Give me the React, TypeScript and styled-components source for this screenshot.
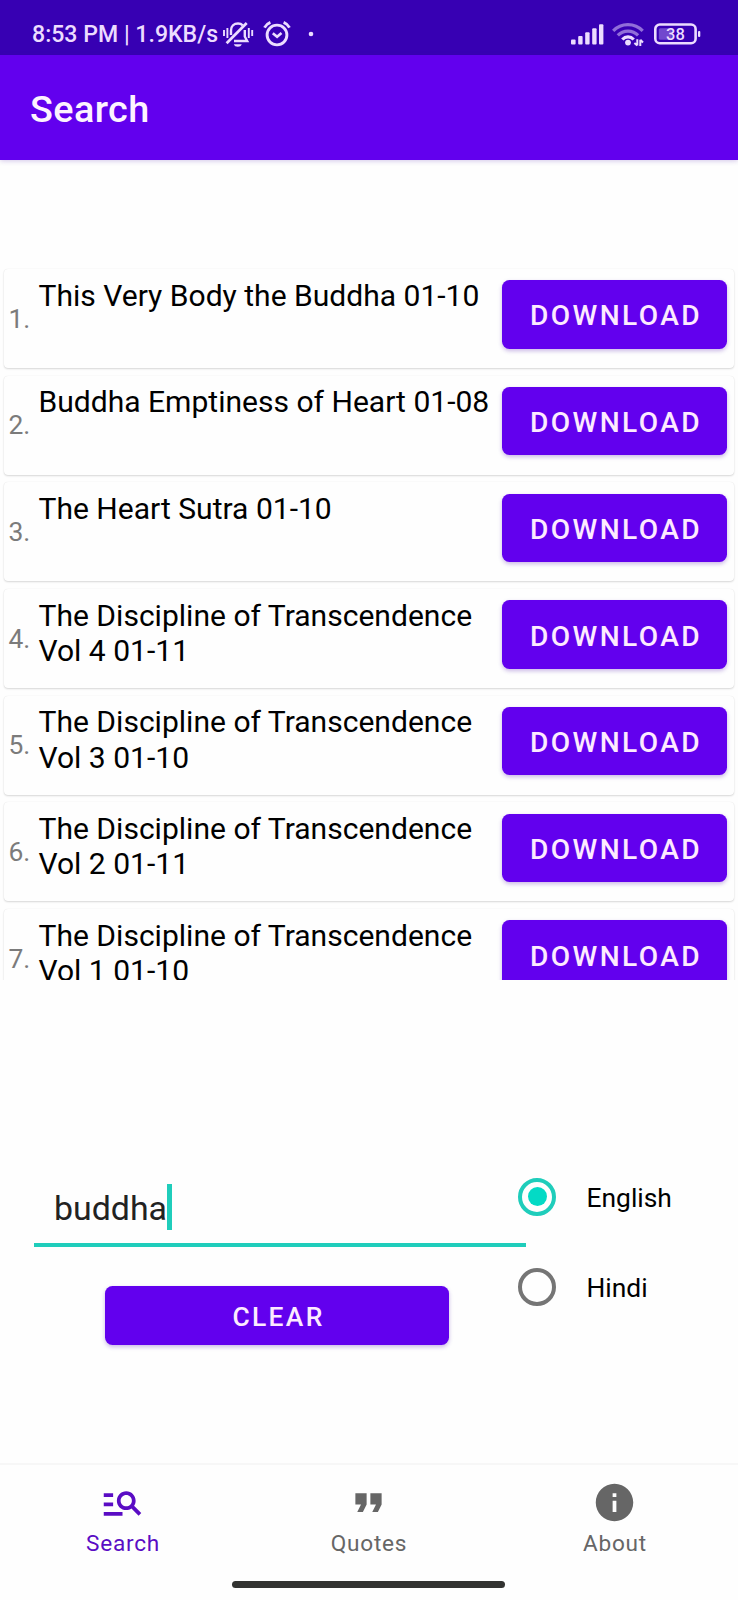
import React, { useState } from "react";
import styled, { createGlobalStyle, css } from "styled-components";
import { MdManageSearch, MdFormatQuote, MdInfo } from "react-icons/md";

const GlobalStyle = createGlobalStyle`
  *, *::before, *::after { box-sizing: border-box; }
  html, body { margin: 0; padding: 0; background: #fff; }
  body { font-family: Roboto, "Liberation Sans", sans-serif; overflow: hidden; }
  button, input { font-family: inherit; }
`;

const Screen = styled.div`
  display: flex;
  flex-direction: column;
  width: 738px;
  height: 1600px;
  background: #fefefe;
  overflow: hidden;
`;

const StatusBar = styled.header`
  display: flex;
  justify-content: space-between;
  align-items: center;
  flex: none;
  height: 55px;
  padding: 13px 36px 0 32px;
  background: #3700b3;
  color: #ecdcff;
`;

const StatusGroup = styled.div`
  display: flex;
  align-items: center;
`;

const Clock = styled.span`
  width: 190px;
  padding-top: 2px;
  font-size: 23.1px;
  line-height: 28px;
  font-weight: 500;
  white-space: nowrap;
`;

const StatusIcon = styled.svg<{ $gap?: number }>`
  display: block;
  flex: none;
  margin-left: ${(p) => p.$gap ?? 0}px;
`;

const AppBar = styled.div`
  display: flex;
  align-items: center;
  flex: none;
  height: 105px;
  padding: 3px 30px 0;
  background: #6200ee;
  box-shadow: 0 1px 5px rgba(60, 0, 160, 0.22);
`;

const AppTitle = styled.h1`
  margin: 0;
  font-size: 37.8px;
  line-height: 44px;
  font-weight: 500;
  letter-spacing: 0.4px;
  color: #fdf3ff;
`;

const Results = styled.ol`
  flex: none;
  height: 720px;
  margin: 100px 0 0;
  padding: 9px 4px 0;
  list-style: none;
  overflow: hidden;
`;

const ResultCard = styled.li`
  display: flex;
  height: 99px;
  margin-bottom: 7.7px;
  padding: 0 7px 0 4.5px;
  border-radius: 4px;
  background: #fefefe;
  box-shadow: 0 1px 2px rgba(0, 0, 0, 0.15), 0 0 1px rgba(0, 0, 0, 0.1);
`;

const Index = styled.span`
  flex: none;
  width: 30px;
  padding-top: 34.6px;
  font-size: 26.4px;
  line-height: 31px;
  color: #7b7b7b;
`;

const BookTitle = styled.span`
  flex: 1;
  min-width: 0;
  padding-top: 8.6px;
  font-size: 30.05px;
  line-height: 35.4px;
  color: #000;
`;

const ContainedButton = styled.button<{ $wide?: boolean }>`
  flex: none;
  border: 0;
  border-radius: 7.5px;
  background: #6200ee;
  color: #fdeaff;
  font-weight: 500;
  text-transform: uppercase;
  box-shadow: 0 2px 4px rgba(70, 0, 170, 0.28);
  ${(p) =>
    p.$wide
      ? css`
          width: 344px;
          height: 59px;
          padding: 2px 0 0 3px;
          font-size: 26.4px;
          letter-spacing: 2.35px;
        `
      : css`
          width: 225px;
          height: 68.5px;
          margin-top: 11.2px;
          padding: 3px 0 0 3px;
          font-size: 28.1px;
          letter-spacing: 2.4px;
        `}
`;

const SearchPanel = styled.section`
  display: flex;
  flex: none;
  height: 283px;
  margin-top: 200px;
`;

const QueryColumn = styled.div`
  display: flex;
  flex-direction: column;
  align-items: center;
  gap: 39px;
  width: 485px;
  padding-left: 69px;
`;

const QueryField = styled.div`
  display: flex;
  align-items: flex-start;
  align-self: flex-start;
  width: 492.5px;
  height: 67px;
  margin-left: -35.5px;
  padding: 4px 0 0 20.5px;
  border-bottom: 4px solid #1fcdbb;
  font-size: 33.9px;
  line-height: 50px;
  color: #222;
`;

const Caret = styled.i`
  width: 5px;
  height: 46px;
  background: #1fcdbb;
`;

const LanguageGroup = styled.div`
  display: flex;
  flex-direction: column;
  width: 220px;
  margin-top: -2.5px;
  padding-left: 33px;
`;

const LanguageOption = styled.button`
  display: flex;
  align-items: center;
  gap: 30.5px;
  height: 38px;
  margin-bottom: 52.2px;
  padding: 0;
  border: 0;
  background: none;
  color: #000;
  font-size: 26.4px;
  text-align: left;
`;

const RadioRing = styled.span<{ $on: boolean }>`
  display: grid;
  place-items: center;
  flex: none;
  width: 38px;
  height: 38px;
  border: 4px solid ${(p) => (p.$on ? "#1fcdbb" : "#757575")};
  border-radius: 50%;

  &::after {
    content: "";
    width: 19px;
    height: 19px;
    border-radius: 50%;
    background: ${(p) => (p.$on ? "#03dac5" : "transparent")};
  }
`;

const OptionLabel = styled.span`
  padding-top: 2px;
`;

const BottomNav = styled.nav`
  display: grid;
  grid-template-columns: repeat(3, 1fr);
  flex: none;
  height: 118px;
  border-top: 2px solid #f7f7f7;
`;

const NavItem = styled.button<{ $active: boolean }>`
  display: flex;
  flex-direction: column;
  align-items: center;
  padding: 15px 0 0;
  border: 0;
  background: none;
  color: ${(p) => (p.$active ? "#5a0cc4" : "#666")};

  svg {
    display: block;
    width: 45px;
    height: 45px;
    margin-right: 0.6px;
  }
`;

const NavLabel = styled.span`
  margin-top: 5px;
  font-size: 22.6px;
  line-height: 27px;
  letter-spacing: 0.75px;
`;

const HomeIndicator = styled.div`
  flex: none;
  width: 273px;
  height: 7px;
  margin: 0 0 0 232px;
  border-radius: 4px;
  background: #323331;
`;

const MutedBell = () => (
  <StatusIcon width="32" height="28" viewBox="0 0 32 28" fill="none" stroke="currentColor" strokeWidth="2.4">
    <path d="M2 10v6M5.4 8v10M26.8 8v10M30.2 10v6" strokeWidth="1.9" />
    <path d="M9 15V10.500c0-4.200 3-7 7-7 2 0 3.600.7 4.700 1.800M22.800 10V16.500l2.400 4.500H12" />
    <path d="M4.600 23.200 24.700 3" strokeWidth="2.7" />
    <path d="M11.800 24.200h8c-.7 1.700-2 2.500-4 2.500s-3.400-.8-4-2.500z" fill="currentColor" stroke="none" />
  </StatusIcon>
);

const AlarmClock = () => (
  <StatusIcon $gap={8.5} width="28" height="28" viewBox="0 0 28 28" fill="none" stroke="currentColor" strokeWidth="2.9">
    <circle cx="14" cy="15" r="9.9" />
    <path d="m9.8 13.2 4.3 3.6 4.400-3.800" strokeWidth="2.6" />
    <path d="M1.500 7.700C2.700 5.400 4.600 3.500 7.400 2.400M26.500 7.700c-1.200-2.300-3.100-4.200-5.900-5.300" />
  </StatusIcon>
);

const MoreDot = () => (
  <StatusIcon $gap={17.5} width="6" height="6" viewBox="0 0 6 6">
    <circle cx="3" cy="3" r="2.3" fill="currentColor" />
  </StatusIcon>
);

const SignalBars = () => (
  <StatusIcon width="34" height="22" viewBox="0 0 34 22" fill="currentColor">
    <rect x="1" y="16.5" width="4.6" height="5" rx="1" />
    <rect x="8.2" y="12.9" width="4.4" height="8.6" rx="1" />
    <rect x="15.2" y="9.3" width="4.4" height="12.2" rx="1" />
    <rect x="22.2" y="5.3" width="4.4" height="16.2" rx="1" />
    <rect x="29" y="1.3" width="4.4" height="20.200" rx="1" />
  </StatusIcon>
);

const WifiSignal = () => (
  <StatusIcon $gap={8} width="32" height="25" viewBox="0 0 32 25" fill="none" stroke="currentColor" strokeWidth="3.2">
    <path d="M1.2 8.8c8-8.3 21.5-8.3 29.500 0" opacity=".5" />
    <path d="M5.8 13.300c5.500-5.700 14.800-5.700 20.300 0" opacity=".5" />
    <path d="M10.300 17.500c3.200-3.500 8.200-3.500 11.400 0" />
    <circle cx="16" cy="20.600" r="2.900" fill="currentColor" stroke="none" />
    <path d="M25.300 17.300v6.300M22.400 20.900l2.900 2.700M28.300 24v-6.300M31 20.500l-2.700-2.800" strokeWidth="2" />
  </StatusIcon>
);

const Battery = () => (
  <StatusIcon $gap={10} width="48" height="22" viewBox="0 0 48 22" fill="none">
    <rect x="1.3" y="1.5" width="40.3" height="18.7" rx="4.5" stroke="currentColor" strokeWidth="2.6" />
    <rect x="4.8" y="5.2" width="13" height="11.5" rx="1.5" fill="#7148ce" />
    <rect x="44" y="8" width="2.3" height="6" rx="1" fill="currentColor" />
    <text x="21.5" y="16.8" textAnchor="middle" fontSize="16.5" fontWeight="500" fill="currentColor">
      38
    </text>
  </StatusIcon>
);

const books = [
  "This Very Body the Buddha 01-10",
  "Buddha Emptiness of Heart 01-08",
  "The Heart Sutra 01-10",
  "The Discipline of Transcendence Vol 4 01-11",
  "The Discipline of Transcendence Vol 3 01-10",
  "The Discipline of Transcendence Vol 2 01-11",
  "The Discipline of Transcendence Vol 1 01-10",
];

const languages = ["English", "Hindi"];

const tabs = [
  { label: "Search", Icon: MdManageSearch },
  { label: "Quotes", Icon: MdFormatQuote },
  { label: "About", Icon: MdInfo },
];

export default function App() {
  const [query, setQuery] = useState("buddha");
  const [language, setLanguage] = useState("English");
  const [tab, setTab] = useState("Search");

  return (
    <>
      <GlobalStyle />
      <Screen>
        <StatusBar>
          <StatusGroup>
            <Clock>8:53 PM | 1.9KB/s</Clock>
            <MutedBell />
            <AlarmClock />
            <MoreDot />
          </StatusGroup>
          <StatusGroup>
            <SignalBars />
            <WifiSignal />
            <Battery />
          </StatusGroup>
        </StatusBar>
        <AppBar>
          <AppTitle>Search</AppTitle>
        </AppBar>
        <Results>
          {books.map((title, i) => (
            <ResultCard key={title}>
              <Index>{i + 1}.</Index>
              <BookTitle>{title}</BookTitle>
              <ContainedButton>Download</ContainedButton>
            </ResultCard>
          ))}
        </Results>
        <SearchPanel>
          <QueryColumn>
            <QueryField>
              {query}
              <Caret />
            </QueryField>
            <ContainedButton $wide onClick={() => setQuery("")}>
              Clear
            </ContainedButton>
          </QueryColumn>
          <LanguageGroup role="radiogroup">
            {languages.map((name) => (
              <LanguageOption key={name} role="radio" aria-checked={name === language} onClick={() => setLanguage(name)}>
                <RadioRing $on={name === language} />
                <OptionLabel>{name}</OptionLabel>
              </LanguageOption>
            ))}
          </LanguageGroup>
        </SearchPanel>
        <BottomNav>
          {tabs.map(({ label, Icon }) => (
            <NavItem key={label} $active={label === tab} onClick={() => setTab(label)}>
              <Icon />
              <NavLabel>{label}</NavLabel>
            </NavItem>
          ))}
        </BottomNav>
        <HomeIndicator />
      </Screen>
    </>
  );
}
